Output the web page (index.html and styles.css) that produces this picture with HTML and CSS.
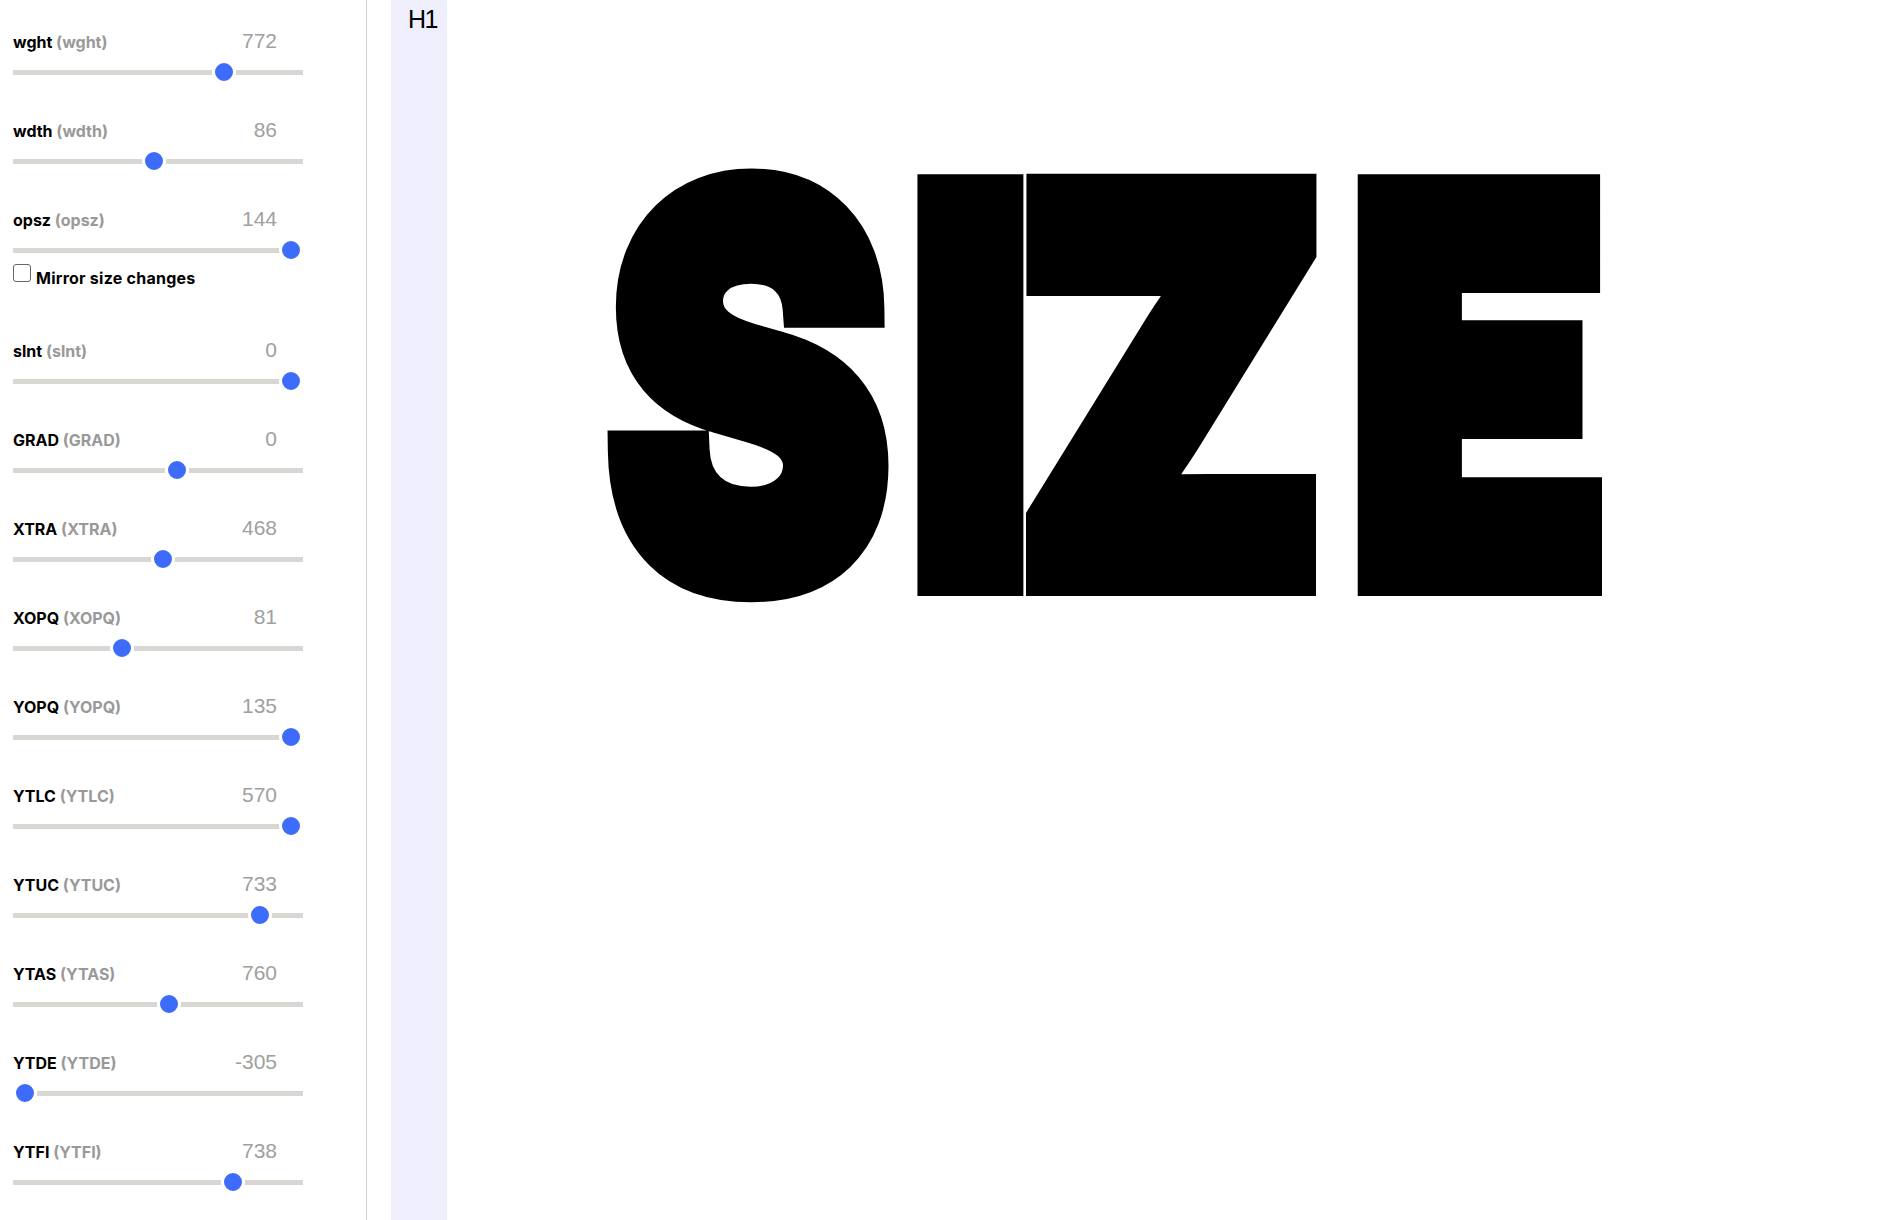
FILE: index.html
```html
<!DOCTYPE html>
<html lang="en">
<head>
<meta charset="utf-8">
<title>Roboto Flex axes</title>
<link rel="stylesheet" href="styles.css">
</head>
<body>
<div class="app">
  <aside class="panel">
    <div class="axis"><div class="head"><label class="name">wght <span class="tag">(wght)</span></label><output class="value">772</output></div><input class="slider" type="range" min="100" max="1000" value="772"></div>
    <div class="axis"><div class="head"><label class="name">wdth <span class="tag">(wdth)</span></label><output class="value">86</output></div><input class="slider" type="range" min="25" max="151" value="86"></div>
    <div class="axis axis-opsz"><div class="head"><label class="name">opsz <span class="tag">(opsz)</span></label><output class="value">144</output></div><input class="slider" type="range" min="8" max="144" value="144">
      <label class="mirror"><input class="check" type="checkbox"><span>Mirror size changes</span></label></div>
    <div class="axis"><div class="head"><label class="name">slnt <span class="tag">(slnt)</span></label><output class="value">0</output></div><input class="slider" type="range" min="-10" max="0" value="0"></div>
    <div class="axis"><div class="head"><label class="name">GRAD <span class="tag">(GRAD)</span></label><output class="value">0</output></div><input class="slider" type="range" min="-200" max="150" value="0"></div>
    <div class="axis"><div class="head"><label class="name">XTRA <span class="tag">(XTRA)</span></label><output class="value">468</output></div><input class="slider" type="range" min="323" max="603" value="468"></div>
    <div class="axis"><div class="head"><label class="name">XOPQ <span class="tag">(XOPQ)</span></label><output class="value">81</output></div><input class="slider" type="range" min="27" max="175" value="81"></div>
    <div class="axis"><div class="head"><label class="name">YOPQ <span class="tag">(YOPQ)</span></label><output class="value">135</output></div><input class="slider" type="range" min="25" max="135" value="135"></div>
    <div class="axis"><div class="head"><label class="name">YTLC <span class="tag">(YTLC)</span></label><output class="value">570</output></div><input class="slider" type="range" min="416" max="570" value="570"></div>
    <div class="axis"><div class="head"><label class="name">YTUC <span class="tag">(YTUC)</span></label><output class="value">733</output></div><input class="slider" type="range" min="528" max="760" value="733"></div>
    <div class="axis"><div class="head"><label class="name">YTAS <span class="tag">(YTAS)</span></label><output class="value">760</output></div><input class="slider" type="range" min="649" max="854" value="760"></div>
    <div class="axis"><div class="head"><label class="name">YTDE <span class="tag">(YTDE)</span></label><output class="value">-305</output></div><input class="slider" type="range" min="-305" max="-98" value="-305"></div>
    <div class="axis"><div class="head"><label class="name">YTFI <span class="tag">(YTFI)</span></label><output class="value">738</output></div><input class="slider" type="range" min="560" max="788" value="738"></div>
  </aside>
  <div class="tag-col">H1</div>
  <h1 class="specimen"><span class="glyph g-s">S</span><span class="glyph g-i">I</span><span class="glyph g-z">Z</span><span class="glyph g-e">E</span></h1>
</div>
</body>
</html>
```
FILE: styles.css
```css
html, body {
  margin: 0;
  height: 100%;
  background: #fff;
  overflow: hidden;
}
.app {
  display: flex;
  height: 1220px;
}
.panel {
  box-sizing: border-box;
  width: 367px;
  flex: none;
  padding: 28px 0 0 13px;
  border-right: 1px solid #d0d0d0;
}
.axis {
  width: 290px;
  height: 89px;
}
.axis-opsz {
  height: 131px;
}
.head {
  display: flex;
  justify-content: space-between;
  align-items: baseline;
  width: 264px;
  height: 28px;
  margin-bottom: 4px;
  line-height: 28px;
}
.name {
  position: relative;
  top: -1px;
  font: 700 16px/28px Inter, sans-serif;
  color: #000;
}
.tag {
  color: #999;
}
.value {
  position: relative;
  top: -1px;
  font: 400 21px/28px "Liberation Sans", sans-serif;
  color: #a0a0a0;
}
.slider {
  -webkit-appearance: none;
  appearance: none;
  display: block;
  width: 290px;
  height: 24px;
  margin: 0;
  background: transparent;
}
.slider::-webkit-slider-runnable-track {
  height: 5px;
  background: #d9d7d4;
}
.slider::-webkit-slider-thumb {
  -webkit-appearance: none;
  box-sizing: content-box;
  width: 18px;
  height: 18px;
  margin-top: -9.5px;
  border: 3px solid #fff;
  border-radius: 50%;
  background: #3d6bfa;
}
.mirror {
  display: flex;
  align-items: flex-start;
  gap: 5px;
  padding-top: 2px;
  font: 700 16px/28px Inter, sans-serif;
  letter-spacing: .25px;
  color: #000;
}
.check {
  -webkit-appearance: none;
  appearance: none;
  box-sizing: border-box;
  flex: none;
  width: 18px;
  height: 18px;
  margin: 0;
  border: 1px solid #666;
  border-radius: 3px;
  background: #fff;
}
.tag-col {
  flex: none;
  box-sizing: border-box;
  width: 56px;
  margin-left: 24px;
  padding: 5px 0 0 17px;
  background: #eeeefc;
  font: 400 25px/28px "Liberation Sans", sans-serif;
  letter-spacing: -1.5px;
  color: #000;
}
.specimen {
  display: flex;
  align-items: flex-start;
  margin: 0 0 0 162px;
  padding-top: 124px;
  font: 400 478px/1 Roboto, sans-serif;
  color: #000;
  -webkit-text-stroke: 82px #000;
}
.glyph {
  display: block;
  flex: none;
  transform-origin: 0 0;
}
.g-s {
  width: 306.6px;
  margin-top: -2px;
  font-family: Inter, sans-serif;
  font-size: 527px;
  font-weight: 800;
  -webkit-text-stroke-width: 40px;
  transform: scaleX(.8);
}
.g-i {
  width: 104.6px;
  margin-top: 29px;
  transform: scaleX(.834);
}
.g-z {
  width: 338.8px;
  margin-top: -3px;
  font-family: Inter, sans-serif;
  font-size: 528px;
  font-weight: 900;
  -webkit-text-stroke-width: 38px;
  transform: scaleX(.825);
}
.g-e {
  width: 300px;
  margin-top: 29px;
  transform: scaleX(.82);
}
```
